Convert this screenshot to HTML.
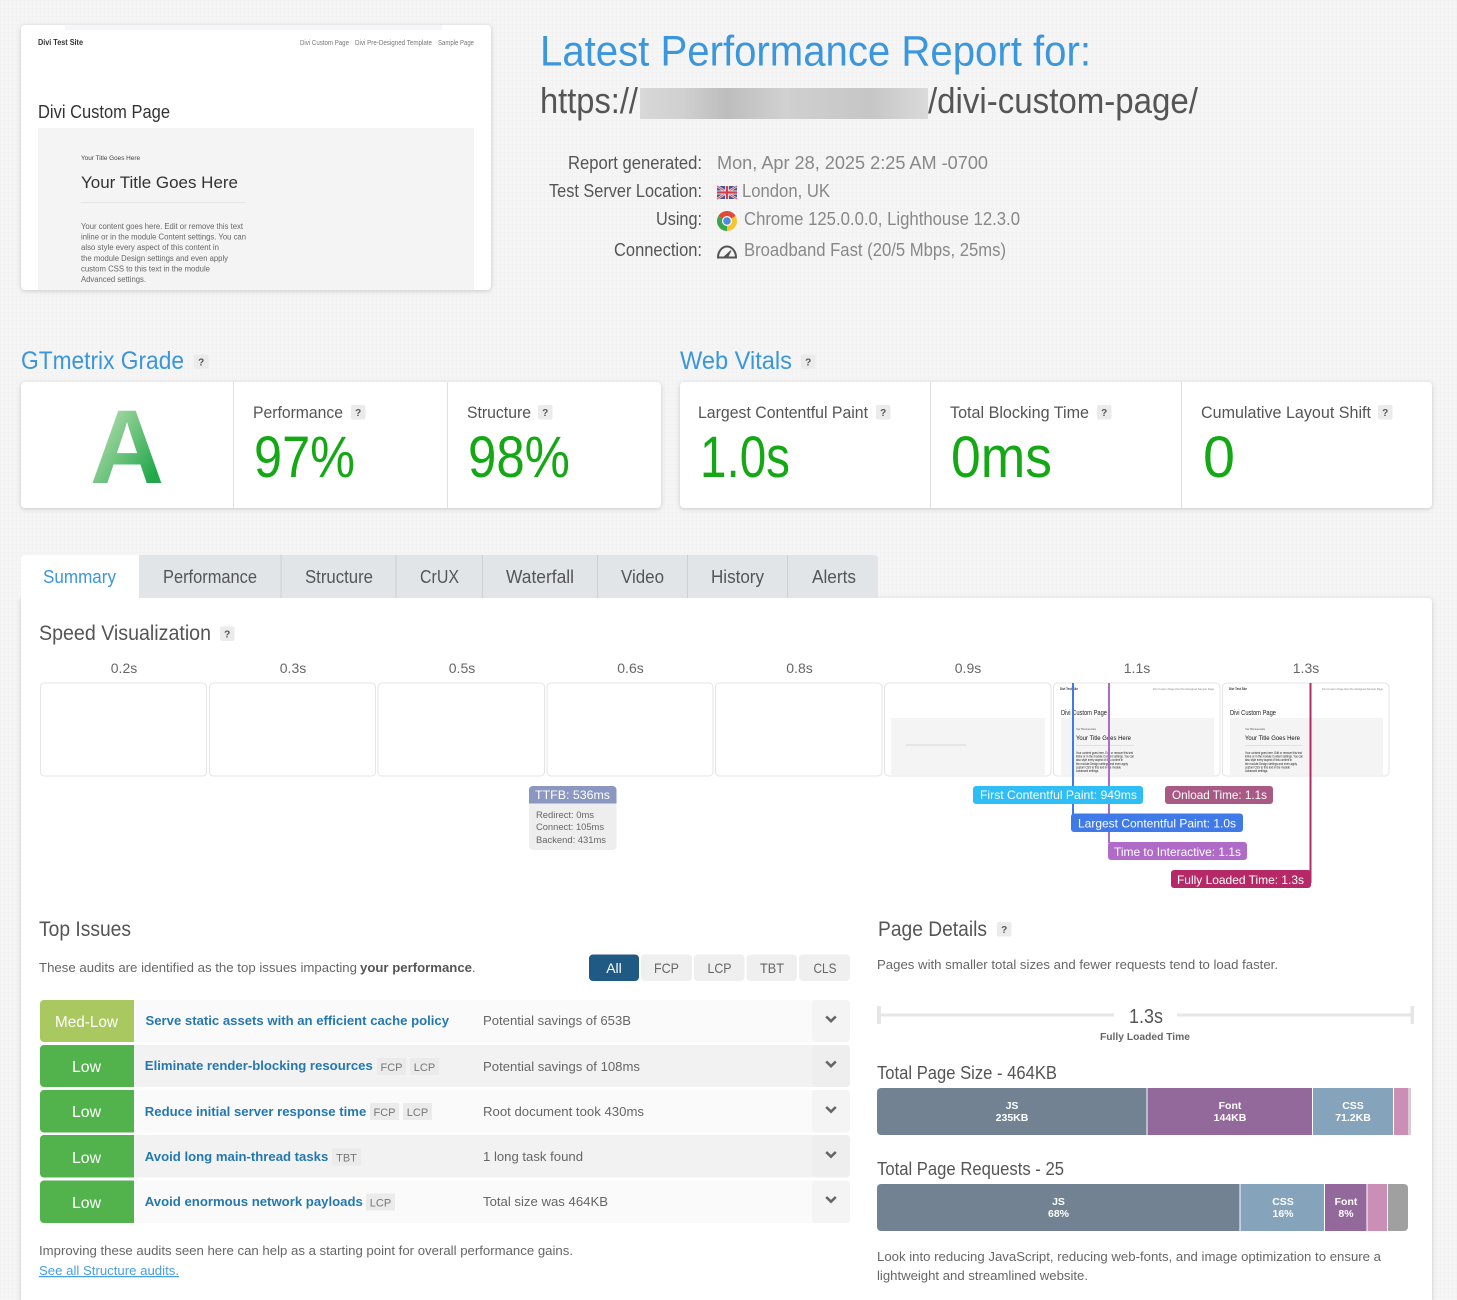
<!DOCTYPE html>
<html lang="en"><head><meta charset="utf-8"><title>GTmetrix Report</title>
<style>
html,body{margin:0;padding:0;width:1457px;height:1300px;overflow:hidden}
body{position:relative;background-color:#f5f5f5;background-image:linear-gradient(rgba(0,0,0,.008) 1px,transparent 1px),linear-gradient(90deg,rgba(0,0,0,.008) 1px,transparent 1px);background-size:4px 4px;font-family:"Liberation Sans",sans-serif}
.b{position:absolute;background:#fff;border-radius:4px;box-shadow:0 1px 5px rgba(0,0,0,.18)}
svg{position:absolute;left:0;top:0}
text{font-family:"Liberation Sans",sans-serif}
.h{fill:#555}.bl{fill:#3a96dd}.g{fill:#15a815}
.w{fill:#fff}.c{text-anchor:middle}
.m{fill:#888}.s{fill:#666;font-size:12.5px}.t{fill:#2478b0;font-size:12.5px;font-weight:bold}
.tg{fill:#777;font-size:11px;text-anchor:middle}
.bar{fill:#fff;font-size:10.5px;font-weight:bold;text-anchor:middle}
.q{fill:#555;font-size:10px;font-weight:bold;text-anchor:middle}
.fb{fill:#666;text-anchor:middle;font-size:14px}
.ch{fill:none;stroke:#666;stroke-width:2.6}
</style></head><body>
<div class="b" style="left:21px;top:25px;width:470px;height:265px"></div>
<div class="b" style="left:21px;top:382px;width:640px;height:126px"></div>
<div class="b" style="left:680px;top:382px;width:752px;height:126px"></div>
<div class="b" style="left:21px;top:598px;width:1411px;height:720px;border-radius:0 4px 0 0"></div>
<svg width="1457" height="1300" viewBox="0 0 1457 1300" xmlns="http://www.w3.org/2000/svg">
<defs>
<linearGradient id="ag" x1="0" y1="0" x2="1" y2="1"><stop offset=".1" stop-color="#cbe4bd"/><stop offset=".8" stop-color="#20a84a"/></linearGradient>
<linearGradient id="bg" x1="0" x2="1" y1="0" y2="0"><stop offset="0" stop-color="#d8d8d8"/><stop offset=".15" stop-color="#d0d0d0"/><stop offset=".3" stop-color="#bdbdbd"/><stop offset=".5" stop-color="#d0d0d0"/><stop offset=".8" stop-color="#c6c6c6"/><stop offset="1" stop-color="#dadada"/></linearGradient>
<filter id="s1"><feGaussianBlur stdDeviation=".35"/></filter>
<filter id="s2"><feGaussianBlur stdDeviation=".3"/></filter>
</defs>

<!-- report screenshot -->
<g filter="url(#s1)">
<rect x="65" y="25" width="377" height="5" fill="#f5f6fa"/>
<text x="38" y="45" font-size="8" font-weight="bold" fill="#333" textLength="45" lengthAdjust="spacingAndGlyphs">Divi Test Site</text>
<text x="300" y="45" font-size="7" fill="#777" textLength="49" lengthAdjust="spacingAndGlyphs">Divi Custom Page</text>
<text x="355" y="45" font-size="7" fill="#777" textLength="77" lengthAdjust="spacingAndGlyphs">Divi Pre-Designed Template</text>
<text x="438" y="45" font-size="7" fill="#777" textLength="36" lengthAdjust="spacingAndGlyphs">Sample Page</text>
<text x="38" y="118" font-size="18" fill="#333" textLength="132" lengthAdjust="spacingAndGlyphs">Divi Custom Page</text>
<rect x="38" y="128" width="436" height="162" fill="#f4f4f4"/>
<text x="81" y="160" font-size="6.5" fill="#444" textLength="59" lengthAdjust="spacingAndGlyphs">Your Title Goes Here</text>
<text x="81" y="188" font-size="17" fill="#333" textLength="157" lengthAdjust="spacingAndGlyphs">Your Title Goes Here</text>
<rect x="81" y="202" width="165" height="1" fill="#e2e6e6"/>
<g font-size="8" fill="#666">
<text x="81" y="229" textLength="162" lengthAdjust="spacingAndGlyphs">Your content goes here. Edit or remove this text</text>
<text x="81" y="239.500" textLength="165" lengthAdjust="spacingAndGlyphs">inline or in the module Content settings. You can</text>
<text x="81" y="250" textLength="138" lengthAdjust="spacingAndGlyphs">also style every aspect of this content in</text>
<text x="81" y="261" textLength="147" lengthAdjust="spacingAndGlyphs">the module Design settings and even apply</text>
<text x="81" y="271.500" textLength="129" lengthAdjust="spacingAndGlyphs">custom CSS to this text in the module</text>
<text x="81" y="282" textLength="65" lengthAdjust="spacingAndGlyphs">Advanced settings.</text>
</g></g>

<!-- header -->
<text x="540" y="65.500" font-size="43" class="bl" textLength="551" lengthAdjust="spacingAndGlyphs">Latest Performance Report for:</text>
<text x="540" y="113" font-size="36" class="h" textLength="98" lengthAdjust="spacingAndGlyphs">https://</text>
<rect x="640" y="88" width="288" height="31" fill="url(#bg)"/>
<text x="928" y="113" font-size="36" class="h" textLength="270" lengthAdjust="spacingAndGlyphs">/divi-custom-page/</text>
<g font-size="18" fill="#555">
<text x="568" y="169" textLength="134" lengthAdjust="spacingAndGlyphs">Report generated:</text>
<text x="549" y="197" textLength="153" lengthAdjust="spacingAndGlyphs">Test Server Location:</text>
<text x="656" y="225" textLength="46" lengthAdjust="spacingAndGlyphs">Using:</text>
<text x="614" y="256" textLength="88" lengthAdjust="spacingAndGlyphs">Connection:</text>
</g>
<g font-size="18" class="m">
<text x="717" y="169" textLength="271" lengthAdjust="spacingAndGlyphs">Mon, Apr 28, 2025 2:25 AM -0700</text>
<text x="742" y="197" textLength="88" lengthAdjust="spacingAndGlyphs">London, UK</text>
<text x="744" y="225" textLength="276" lengthAdjust="spacingAndGlyphs">Chrome 125.0.0.0, Lighthouse 12.3.0</text>
<text x="744" y="256" textLength="262" lengthAdjust="spacingAndGlyphs">Broadband Fast (20/5 Mbps, 25ms)</text>
</g>
<!-- flag -->
<rect x="717" y="186" width="20" height="13" fill="#3c5a9a"/>
<path d="M717 186L737 199M737 186L717 199" stroke="#f3d6d6" stroke-width="2.4"/>
<path d="M717 186L737 199M737 186L717 199" stroke="#cf4b5f" stroke-width=".9"/>
<path d="M727 186V199M717 192.500H737" stroke="#f4e4e4" stroke-width="4"/>
<path d="M727 186V199M717 192.500H737" stroke="#d2404f" stroke-width="2.200"/>
<!-- chrome -->
<path d="M727 221L735.660 216A10 10 0 0 0 718.340 216Z" fill="#e04a3a"/>
<path d="M727 221L718.340 216A10 10 0 0 0 727 231Z" fill="#3aa64c"/>
<path d="M727 221L727 231A10 10 0 0 0 735.660 216Z" fill="#f8c52e"/>
<circle cx="727" cy="221" r="5" fill="#fff"/><circle cx="727" cy="221" r="3.800" fill="#4a8be0"/>
<!-- gauge -->
<path d="M718 257.500A9 11 0 0 1 736 257.500Z" fill="none" stroke="#555" stroke-width="2"/>
<path d="M724 257L731 250.500L727.500 257.500Z" fill="#555" stroke="#555"/>

<!-- section headings -->
<text x="21" y="369" font-size="25" class="bl" textLength="163" lengthAdjust="spacingAndGlyphs">GTmetrix Grade</text>
<rect x="194" y="354.500" width="14.500" height="14.500" rx="2" fill="#ebebeb"/><text x="201.200" y="365.500" class="q">?</text>
<text x="680" y="369" font-size="25" class="bl" textLength="112" lengthAdjust="spacingAndGlyphs">Web Vitals</text>
<rect x="801" y="354.500" width="14.500" height="14.500" rx="2" fill="#ebebeb"/><text x="808.200" y="365.500" class="q">?</text>

<!-- grade card -->
<path d="M233.500 382V508M447.500 382V508M930.500 382V508M1181.500 382V508" stroke="#e0e0e0"/>
<text x="90" y="483" font-size="105" font-weight="bold" fill="url(#ag)" textLength="74" lengthAdjust="spacingAndGlyphs">A</text>
<g font-size="17" fill="#555">
<text x="253" y="418" textLength="90" lengthAdjust="spacingAndGlyphs">Performance</text>
<text x="467" y="418" textLength="64" lengthAdjust="spacingAndGlyphs">Structure</text>
<text x="698" y="418" textLength="170" lengthAdjust="spacingAndGlyphs">Largest Contentful Paint</text>
<text x="950" y="418" textLength="139" lengthAdjust="spacingAndGlyphs">Total Blocking Time</text>
<text x="1201" y="418" textLength="170" lengthAdjust="spacingAndGlyphs">Cumulative Layout Shift</text>
</g>
<g fill="#ebebeb">
<rect x="351" y="405" width="14.500" height="14.500" rx="2"/><rect x="538" y="405" width="14.500" height="14.500" rx="2"/><rect x="876" y="405" width="14.500" height="14.500" rx="2"/><rect x="1097" y="405" width="14.500" height="14.500" rx="2"/><rect x="1378" y="405" width="14.500" height="14.500" rx="2"/>
</g>
<text x="358.200" y="416" class="q">?</text><text x="545.200" y="416" class="q">?</text><text x="883.200" y="416" class="q">?</text><text x="1104.200" y="416" class="q">?</text><text x="1385.200" y="416" class="q">?</text>
<g font-size="58" class="g">
<text x="254" y="477" textLength="101" lengthAdjust="spacingAndGlyphs">97%</text>
<text x="468" y="477" textLength="102" lengthAdjust="spacingAndGlyphs">98%</text>
<text x="700" y="477" textLength="90" lengthAdjust="spacingAndGlyphs">1.0s</text>
<text x="951" y="477" textLength="101" lengthAdjust="spacingAndGlyphs">0ms</text>
<text x="1203" y="477" textLength="32" lengthAdjust="spacingAndGlyphs">0</text>
</g>

<!-- tabs -->
<path d="M139 555H874a4 4 0 0 1 4 4V598H139Z" fill="#e1e5e8"/>
<path d="M21 600V559a4 4 0 0 1 4-4H139V600Z" fill="#fff"/>
<path d="M281 555V598M396 555V598M482.500 555V598M597.500 555V598M687.500 555V598M787.500 555V598" stroke="#cdd1d4" stroke-width="1"/>
<text x="43" y="583" font-size="18" class="bl" textLength="73" lengthAdjust="spacingAndGlyphs">Summary</text>
<g font-size="18" fill="#555">
<text x="163" y="583" textLength="94" lengthAdjust="spacingAndGlyphs">Performance</text>
<text x="305" y="583" textLength="68" lengthAdjust="spacingAndGlyphs">Structure</text>
<text x="420" y="583" textLength="39" lengthAdjust="spacingAndGlyphs">CrUX</text>
<text x="506" y="583" textLength="68" lengthAdjust="spacingAndGlyphs">Waterfall</text>
<text x="621" y="583" textLength="43" lengthAdjust="spacingAndGlyphs">Video</text>
<text x="711" y="583" textLength="53" lengthAdjust="spacingAndGlyphs">History</text>
<text x="812" y="583" textLength="44" lengthAdjust="spacingAndGlyphs">Alerts</text>
</g>

<!-- speed viz -->
<text x="39" y="640" font-size="21" class="h" textLength="172" lengthAdjust="spacingAndGlyphs">Speed Visualization</text>
<rect x="220" y="626.500" width="14.500" height="14.500" rx="2" fill="#ebebeb"/><text x="227.200" y="637.500" class="q">?</text>
<text x="124" y="673" class="fb">0.2s</text><text x="293" y="673" class="fb">0.3s</text><text x="462" y="673" class="fb">0.5s</text><text x="630.500" y="673" class="fb">0.6s</text><text x="799.500" y="673" class="fb">0.8s</text><text x="968" y="673" class="fb">0.9s</text><text x="1137" y="673" class="fb">1.1s</text><text x="1306" y="673" class="fb">1.3s</text>
<g fill="#fff" stroke="#e4e4e4">
<rect x="40.500" y="683" width="166" height="93" rx="4"/><rect x="209.500" y="683" width="166" height="93" rx="4"/><rect x="378" y="683" width="166.500" height="93" rx="4"/><rect x="547" y="683" width="166" height="93" rx="4"/><rect x="715.500" y="683" width="166.500" height="93" rx="4"/><rect x="884.500" y="683" width="166.500" height="93" rx="4"/><rect x="1053.500" y="683" width="166.500" height="93" rx="4"/><rect x="1222.500" y="683" width="166.500" height="93" rx="4"/>
</g>
<rect x="891" y="718" width="154" height="57" fill="#f4f4f4"/><rect x="906" y="744.500" width="60" height="1" fill="#d8d8d8"/>
<g filter="url(#s2)">
<rect x="1061" y="718" width="153" height="57" fill="#f4f4f4"/>
<text x="1060" y="690" font-size="3.500" font-weight="bold" fill="#333" textLength="18" lengthAdjust="spacingAndGlyphs">Divi Test Site</text>
<text x="1153" y="690" font-size="3" fill="#888" textLength="61" lengthAdjust="spacingAndGlyphs">Divi Custom Page  Divi Pre-Designed  Sample Page</text>
<text x="1061" y="715" font-size="7" fill="#222" textLength="46" lengthAdjust="spacingAndGlyphs">Divi Custom Page</text>
<text x="1076" y="730" font-size="3" fill="#444" textLength="20" lengthAdjust="spacingAndGlyphs">Your Title Goes Here</text>
<text x="1076" y="740" font-size="6" fill="#111" textLength="55" lengthAdjust="spacingAndGlyphs">Your Title Goes Here</text>
<rect x="1076" y="745" width="58" height="1" fill="#e0e0e0"/>
<g font-size="3.400" fill="#222">
<text x="1076" y="754" textLength="57" lengthAdjust="spacingAndGlyphs">Your content goes here. Edit or remove this text</text>
<text x="1076" y="757.500" textLength="58" lengthAdjust="spacingAndGlyphs">inline or in the module Content settings. You can</text>
<text x="1076" y="761" textLength="47" lengthAdjust="spacingAndGlyphs">also style every aspect of this content in</text>
<text x="1076" y="765" textLength="52" lengthAdjust="spacingAndGlyphs">the module Design settings and even apply</text>
<text x="1076" y="768.500" textLength="45" lengthAdjust="spacingAndGlyphs">custom CSS to this text in the module</text>
<text x="1076" y="772" textLength="23" lengthAdjust="spacingAndGlyphs">Advanced settings.</text>
</g>
<rect x="1230" y="718" width="153" height="57" fill="#f4f4f4"/>
<text x="1229" y="690" font-size="3.500" font-weight="bold" fill="#333" textLength="18" lengthAdjust="spacingAndGlyphs">Divi Test Site</text>
<text x="1322" y="690" font-size="3" fill="#888" textLength="61" lengthAdjust="spacingAndGlyphs">Divi Custom Page  Divi Pre-Designed  Sample Page</text>
<text x="1230" y="715" font-size="7" fill="#222" textLength="46" lengthAdjust="spacingAndGlyphs">Divi Custom Page</text>
<text x="1245" y="730" font-size="3" fill="#444" textLength="20" lengthAdjust="spacingAndGlyphs">Your Title Goes Here</text>
<text x="1245" y="740" font-size="6" fill="#111" textLength="55" lengthAdjust="spacingAndGlyphs">Your Title Goes Here</text>
<rect x="1245" y="745" width="58" height="1" fill="#e0e0e0"/>
<g font-size="3.400" fill="#222">
<text x="1245" y="754" textLength="57" lengthAdjust="spacingAndGlyphs">Your content goes here. Edit or remove this text</text>
<text x="1245" y="757.500" textLength="58" lengthAdjust="spacingAndGlyphs">inline or in the module Content settings. You can</text>
<text x="1245" y="761" textLength="47" lengthAdjust="spacingAndGlyphs">also style every aspect of this content in</text>
<text x="1245" y="765" textLength="52" lengthAdjust="spacingAndGlyphs">the module Design settings and even apply</text>
<text x="1245" y="768.500" textLength="45" lengthAdjust="spacingAndGlyphs">custom CSS to this text in the module</text>
<text x="1245" y="772" textLength="23" lengthAdjust="spacingAndGlyphs">Advanced settings.</text>
</g>
</g>
<!-- markers -->
<rect x="1072" y="683" width="2" height="132" fill="#3f7ae8"/>
<rect x="1108" y="683" width="2" height="160" fill="#b06ac8"/>
<rect x="1309.500" y="683" width="2" height="200" fill="#b52a66"/>
<rect x="973" y="786" width="170" height="18" rx="3" fill="#2fbdf5"/>
<text x="980" y="799" font-size="12" class="w" textLength="157" lengthAdjust="spacingAndGlyphs">First Contentful Paint: 949ms</text>
<rect x="1165" y="786" width="108" height="18" rx="3" fill="#a85a85"/>
<text x="1172" y="799" font-size="12" class="w" textLength="95" lengthAdjust="spacingAndGlyphs">Onload Time: 1.1s</text>
<rect x="1071" y="813.500" width="172" height="18.500" rx="3" fill="#3f7ae8"/>
<text x="1078" y="827.500" font-size="12" class="w" textLength="158" lengthAdjust="spacingAndGlyphs">Largest Contentful Paint: 1.0s</text>
<rect x="1108" y="842" width="139" height="18" rx="3" fill="#b06ac8"/>
<text x="1114" y="856" font-size="12" class="w" textLength="127" lengthAdjust="spacingAndGlyphs">Time to Interactive: 1.1s</text>
<rect x="1171" y="870" width="140" height="18" rx="3" fill="#b52a66"/>
<text x="1177" y="884" font-size="12" class="w" textLength="127" lengthAdjust="spacingAndGlyphs">Fully Loaded Time: 1.3s</text>
<!-- ttfb -->
<rect x="529" y="786" width="87.500" height="64" rx="4" fill="#eeeeee"/>
<path d="M529 803.500V790a4 4 0 0 1 4-4H612.500a4 4 0 0 1 4 4V803.500Z" fill="#8b97c0"/>
<text x="535" y="799" font-size="12" class="w" textLength="75" lengthAdjust="spacingAndGlyphs">TTFB: 536ms</text>
<g font-size="9.500" fill="#666">
<text x="536" y="818" textLength="58" lengthAdjust="spacingAndGlyphs">Redirect: 0ms</text>
<text x="536" y="830" textLength="68" lengthAdjust="spacingAndGlyphs">Connect: 105ms</text>
<text x="536" y="843" textLength="70" lengthAdjust="spacingAndGlyphs">Backend: 431ms</text>
</g>

<!-- top issues -->
<text x="39" y="936" font-size="21" class="h" textLength="92" lengthAdjust="spacingAndGlyphs">Top Issues</text>
<text x="39" y="972" class="s" textLength="318" lengthAdjust="spacingAndGlyphs">These audits are identified as the top issues impacting</text>
<text x="360" y="972" class="s" font-weight="bold" textLength="112" lengthAdjust="spacingAndGlyphs" style="fill:#555">your performance</text>
<text x="472" y="972" class="s">.</text>
<rect x="589" y="954.500" width="50" height="26.500" rx="4" fill="#1f5a85"/>
<g fill="#efefef"><rect x="641" y="954.500" width="51" height="26.500" rx="4"/><rect x="694" y="954.500" width="50.500" height="26.500" rx="4"/><rect x="746.500" y="954.500" width="50.500" height="26.500" rx="4"/><rect x="799" y="954.500" width="51" height="26.500" rx="4"/></g>
<text x="614" y="973" font-size="14" class="w c">All</text>
<g font-size="14" fill="#666" text-anchor="middle"><text x="666.500" y="973" textLength="25" lengthAdjust="spacingAndGlyphs">FCP</text><text x="719.500" y="973" textLength="24" lengthAdjust="spacingAndGlyphs">LCP</text><text x="772" y="973" textLength="24" lengthAdjust="spacingAndGlyphs">TBT</text><text x="825" y="973" textLength="23" lengthAdjust="spacingAndGlyphs">CLS</text></g>

<!-- rows -->
<rect x="40" y="1000" width="810" height="42" rx="4" fill="#fafafa"/><rect x="812" y="1000" width="38" height="42" rx="4" fill="#f4f4f4"/>
<rect x="40" y="1045" width="810" height="42" rx="4" fill="#f2f2f2"/><rect x="812" y="1045" width="38" height="42" rx="4" fill="#eeeeee"/>
<rect x="40" y="1090" width="810" height="42.500" rx="4" fill="#fafafa"/><rect x="812" y="1090" width="38" height="42.500" rx="4" fill="#f4f4f4"/>
<rect x="40" y="1135" width="810" height="42.500" rx="4" fill="#f2f2f2"/><rect x="812" y="1135" width="38" height="42.500" rx="4" fill="#eeeeee"/>
<rect x="40" y="1180.500" width="810" height="42.500" rx="4" fill="#fafafa"/><rect x="812" y="1180.500" width="38" height="42.500" rx="4" fill="#f4f4f4"/>
<path d="M134 1000H44a4 4 0 0 0-4 4V1038a4 4 0 0 0 4 4H134Z" fill="#a9c85f"/>
<g fill="#52b24b">
<path d="M134 1045H44a4 4 0 0 0-4 4V1083a4 4 0 0 0 4 4H134Z"/>
<path d="M134 1090H44a4 4 0 0 0-4 4V1128.500a4 4 0 0 0 4 4H134Z"/>
<path d="M134 1135H44a4 4 0 0 0-4 4V1173.500a4 4 0 0 0 4 4H134Z"/>
<path d="M134 1180.500H44a4 4 0 0 0-4 4V1219a4 4 0 0 0 4 4H134Z"/>
</g>
<g font-size="16" class="w">
<text x="55" y="1027" textLength="63" lengthAdjust="spacingAndGlyphs">Med-Low</text>
<text x="72" y="1072" textLength="29" lengthAdjust="spacingAndGlyphs">Low</text>
<text x="72" y="1117" textLength="29" lengthAdjust="spacingAndGlyphs">Low</text>
<text x="72" y="1163" textLength="29" lengthAdjust="spacingAndGlyphs">Low</text>
<text x="72" y="1208" textLength="29" lengthAdjust="spacingAndGlyphs">Low</text>
</g>
<text x="145.500" y="1025" class="t" textLength="303.500" lengthAdjust="spacingAndGlyphs">Serve static assets with an efficient cache policy</text>
<text x="144.800" y="1070" class="t" textLength="228" lengthAdjust="spacingAndGlyphs">Eliminate render-blocking resources</text>
<text x="144.800" y="1116" class="t" textLength="221.500" lengthAdjust="spacingAndGlyphs">Reduce initial server response time</text>
<text x="144.800" y="1161" class="t" textLength="183.500" lengthAdjust="spacingAndGlyphs">Avoid long main-thread tasks</text>
<text x="144.800" y="1206" class="t" textLength="218" lengthAdjust="spacingAndGlyphs">Avoid enormous network payloads</text>
<g fill="#ebebeb">
<rect x="377" y="1058" width="29" height="17"/><rect x="410" y="1058" width="29" height="17"/>
<rect x="370" y="1103" width="29" height="17"/><rect x="403" y="1103" width="29" height="17"/>
<rect x="332" y="1148.500" width="29" height="17"/>
<rect x="366" y="1193.500" width="29" height="17"/>
</g>
<text x="391.500" y="1071" class="tg">FCP</text><text x="424.500" y="1071" class="tg">LCP</text>
<text x="384.500" y="1116" class="tg">FCP</text><text x="417.500" y="1116" class="tg">LCP</text>
<text x="346.500" y="1161.500" class="tg">TBT</text><text x="380.500" y="1206.500" class="tg">LCP</text>
<text x="483" y="1025" class="s" textLength="148" lengthAdjust="spacingAndGlyphs">Potential savings of 653B</text>
<text x="483" y="1071" class="s" textLength="157" lengthAdjust="spacingAndGlyphs">Potential savings of 108ms</text>
<text x="483" y="1116" class="s" textLength="161" lengthAdjust="spacingAndGlyphs">Root document took 430ms</text>
<text x="483" y="1161" class="s" textLength="100" lengthAdjust="spacingAndGlyphs">1 long task found</text>
<text x="483" y="1206" class="s" textLength="125" lengthAdjust="spacingAndGlyphs">Total size was 464KB</text>
<path class="ch" d="M826.200 1016.500L831 1021.200L835.800 1016.500"/>
<path class="ch" d="M826.200 1061.500L831 1066.200L835.800 1061.500"/>
<path class="ch" d="M826.200 1107L831 1111.700L835.800 1107"/>
<path class="ch" d="M826.200 1152L831 1156.700L835.800 1152"/>
<path class="ch" d="M826.200 1197L831 1201.700L835.800 1197"/>
<text x="39" y="1255" class="s" textLength="534" lengthAdjust="spacingAndGlyphs">Improving these audits seen here can help as a starting point for overall performance gains.</text>
<text x="39" y="1275" font-size="12.500" fill="#4a9fe0" text-decoration="underline" textLength="140" lengthAdjust="spacingAndGlyphs">See all Structure audits.</text>

<!-- page details -->
<text x="878" y="936" font-size="21" class="h" textLength="109" lengthAdjust="spacingAndGlyphs">Page Details</text>
<rect x="997" y="922" width="14.500" height="14.500" rx="2" fill="#ebebeb"/><text x="1004.200" y="933" class="q">?</text>
<text x="877" y="969" class="s" textLength="401" lengthAdjust="spacingAndGlyphs">Pages with smaller total sizes and fewer requests tend to load faster.</text>
<g fill="#e6e6e6">
<rect x="877" y="1006" width="4" height="18"/><rect x="1410.500" y="1006" width="3.500" height="18"/>
<rect x="877" y="1013.500" width="237" height="3"/><rect x="1177" y="1013.500" width="237" height="3"/>
</g>
<text x="1129" y="1023" font-size="20" fill="#555" textLength="34" lengthAdjust="spacingAndGlyphs">1.3s</text>
<text x="1100" y="1040" font-size="10.500" font-weight="bold" fill="#666" textLength="90" lengthAdjust="spacingAndGlyphs">Fully Loaded Time</text>
<text x="877" y="1079" font-size="18" fill="#555" textLength="180" lengthAdjust="spacingAndGlyphs">Total Page Size - 464KB</text>
<path d="M1146.500 1088H881a4 4 0 0 0-4 4V1131a4 4 0 0 0 4 4H1146.500Z" fill="#728292"/>
<rect x="1147.500" y="1088" width="164.500" height="47" fill="#93689a"/>
<rect x="1313" y="1088" width="80" height="47" fill="#86a3bc"/>
<rect x="1394" y="1088" width="14.500" height="47" fill="#cb8fb5"/>
<rect x="1409.500" y="1088" width="1" height="47" fill="#a0a0a0"/>
<text x="1012" y="1109" class="bar">JS</text><text x="1012" y="1121" class="bar">235KB</text>
<text x="1230" y="1109" class="bar">Font</text><text x="1230" y="1121" class="bar">144KB</text>
<text x="1353" y="1109" class="bar">CSS</text><text x="1353" y="1121" class="bar">71.2KB</text>
<text x="877" y="1175" font-size="18" fill="#555" textLength="187" lengthAdjust="spacingAndGlyphs">Total Page Requests - 25</text>
<path d="M1239.500 1184H881a4 4 0 0 0-4 4V1227a4 4 0 0 0 4 4H1239.500Z" fill="#728292"/>
<rect x="1240.500" y="1184" width="83.500" height="47" fill="#86a3bc"/>
<rect x="1325" y="1184" width="41.500" height="47" fill="#93689a"/>
<rect x="1367.500" y="1184" width="19.500" height="47" fill="#cb8fb5"/>
<path d="M1388 1184H1404a4 4 0 0 1 4 4V1227a4 4 0 0 1-4 4H1388Z" fill="#a0a0a0"/>
<text x="1058.500" y="1205" class="bar">JS</text><text x="1058.500" y="1217" class="bar">68%</text>
<text x="1283" y="1205" class="bar">CSS</text><text x="1283" y="1217" class="bar">16%</text>
<text x="1346" y="1205" class="bar">Font</text><text x="1346" y="1217" class="bar">8%</text>
<text x="877" y="1261" class="s" textLength="504" lengthAdjust="spacingAndGlyphs">Look into reducing JavaScript, reducing web-fonts, and image optimization to ensure a</text>
<text x="877" y="1280" class="s" textLength="211" lengthAdjust="spacingAndGlyphs">lightweight and streamlined website.</text>
</svg>
</body></html>
